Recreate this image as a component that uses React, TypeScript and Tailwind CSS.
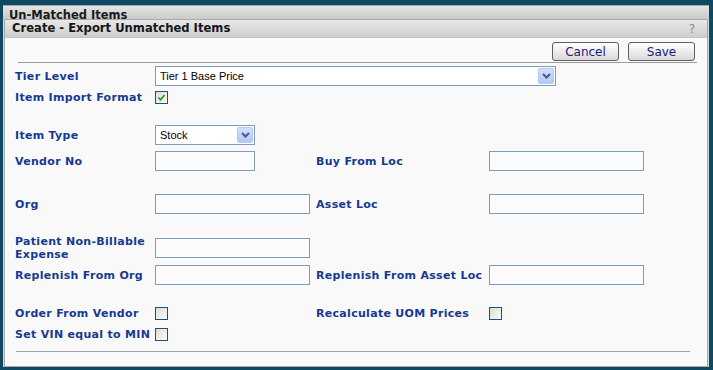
import React from 'react';

const labelCls = "font-['DejaVu_Sans',Verdana,sans-serif] text-[11px] font-bold leading-[13px] tracking-[0.3px] text-[#17398f]";

function TextBox({ w }: { w: number }) {
  return <div className="h-[20px] border border-[#7f9db9] bg-[#fbfbfb]" style={{ width: w }} />;
}

function Chevron() {
  return (
    <svg width="9" height="6" viewBox="0 0 9 6" className="block">
      <path d="M1 1 L4.5 4.5 L8 1" fill="none" stroke="#4d5a7c" strokeWidth="2" />
    </svg>
  );
}

function Select({ w, value }: { w: number; value: string }) {
  return (
    <div className="h-[20px] border border-[#7f9db9] bg-white flex items-center pr-px" style={{ width: w }}>
      <span className="flex-1 pl-[4px] font-['Liberation_Sans',Arial,sans-serif] text-[11px] text-black leading-none">
        {value}
      </span>
      <div className="w-[16px] h-[16px] rounded-[2px] border border-[#b7c9f3] bg-gradient-to-b from-[#d3e0fd] to-[#b2c8f7] flex items-center justify-center">
        <Chevron />
      </div>
    </div>
  );
}

function Check({ checked = false }: { checked?: boolean }) {
  return (
    <div className="w-[13px] h-[13px] border border-[#1c5180] bg-gradient-to-br from-[#dcdcd7] to-[#fbfbf9] flex items-center justify-center">
      {checked && (
        <svg width="9" height="9" viewBox="0 0 9 9" className="block">
          <path d="M1.5 4.5 L3.5 6.8 L7.5 2" fill="none" stroke="#21a121" strokeWidth="1.8" />
        </svg>
      )}
    </div>
  );
}

function Btn({ children }: { children: React.ReactNode }) {
  return (
    <div className="w-[67px] h-[19px] rounded-[3px] border border-[#5f5f5f] bg-gradient-to-b from-[#ffffff] to-[#d9d9d9] flex items-center justify-center font-['DejaVu_Sans',Verdana,sans-serif] text-[12px] text-[#1c1c7a]">
      {children}
    </div>
  );
}

export default function App() {
  return (
    <div className="w-[713px] h-[370px] bg-[#0e4964] overflow-hidden pt-[5px] pl-[3px]">
      <div className="w-[706px] h-[362px] bg-[#d8d8d8] border-t border-[#a7a7a7]">
        {/* outer panel header, mostly hidden under the dialog */}
        <div className="h-[13px] overflow-hidden bg-gradient-to-b from-[#e4e4e4] to-[#cbcbcb] pl-[6px] pt-[5px]">
          <div className="font-['DejaVu_Sans',Verdana,sans-serif] text-[11.5px] font-bold leading-[8px] text-[#1a1a1a]">
            Un-Matched Items
          </div>
        </div>

        {/* dialog */}
        <div className="ml-px w-[704px] h-[348px] border border-[#a9a9a9] bg-[#f9f9f9] flex flex-col">
          <div className="h-[18px] bg-gradient-to-b from-[#e8e8e8] to-[#cdcdcd] border-b border-[#c4c4c4] flex items-center pl-[7px] pr-[12px] pt-px">
            <span className="flex-1 font-['DejaVu_Sans',Verdana,sans-serif] text-[11.6px] font-bold text-[#161616] leading-none">
              Create - Export Unmatched Items
            </span>
            <span className="font-['DejaVu_Sans',Verdana,sans-serif] text-[12px] text-[#8a8a8a] leading-none">?</span>
          </div>

          <div className="pl-[10px] pr-[11px]">
            <div className="flex justify-end gap-[9px] mt-[4px] pr-px">
              <Btn>Cancel</Btn>
              <Btn>Save</Btn>
            </div>
            <div className="ml-[3px] mr-[-1px] mt-px h-px bg-[#9c9c9c]" />

            <div className="mt-[3px] flex items-center h-[20px]">
              <div className={`${labelCls} w-[140px]`}>Tier Level</div>
              <Select w={401} value="Tier 1 Base Price" />
            </div>

            <div className="mt-[5px] flex items-center h-[13px]">
              <div className={`${labelCls} w-[140px]`}>Item Import Format</div>
              <Check checked />
            </div>

            <div className="mt-[21px] flex items-center h-[20px]">
              <div className={`${labelCls} w-[140px]`}>Item Type</div>
              <Select w={100} value="Stock" />
            </div>

            <div className="mt-[6px] flex items-center h-[20px]">
              <div className={`${labelCls} w-[140px]`}>Vendor No</div>
              <div className="w-[161px]"><TextBox w={100} /></div>
              <div className={`${labelCls} w-[173px]`}>Buy From Loc</div>
              <TextBox w={155} />
            </div>

            <div className="mt-[23px] flex items-center h-[20px]">
              <div className={`${labelCls} w-[140px]`}>Org</div>
              <div className="w-[161px]"><TextBox w={155} /></div>
              <div className={`${labelCls} w-[173px]`}>Asset Loc</div>
              <TextBox w={155} />
            </div>

            <div className="mt-[24px] flex items-center h-[20px]">
              <div className={`${labelCls} w-[140px]`}>Patient Non-Billable<br />Expense</div>
              <TextBox w={155} />
            </div>

            <div className="mt-[7px] flex items-center h-[20px]">
              <div className={`${labelCls} w-[140px]`}>Replenish From Org</div>
              <div className="w-[161px]"><TextBox w={155} /></div>
              <div className={`${labelCls} w-[173px]`}>Replenish From Asset Loc</div>
              <TextBox w={155} />
            </div>

            <div className="mt-[22px] flex items-center h-[13px]">
              <div className={`${labelCls} w-[140px]`}>Order From Vendor</div>
              <div className="w-[161px]"><Check /></div>
              <div className={`${labelCls} w-[173px]`}>Recalculate UOM Prices</div>
              <Check />
            </div>

            <div className="mt-[8px] flex items-center h-[13px]">
              <div className={`${labelCls} w-[140px]`}>Set VIN equal to MIN</div>
              <Check />
            </div>

            <div className="mt-[10px] ml-px mr-[6px] h-px bg-[#a3a3a3]" />
          </div>
        </div>
      </div>
    </div>
  );
}
